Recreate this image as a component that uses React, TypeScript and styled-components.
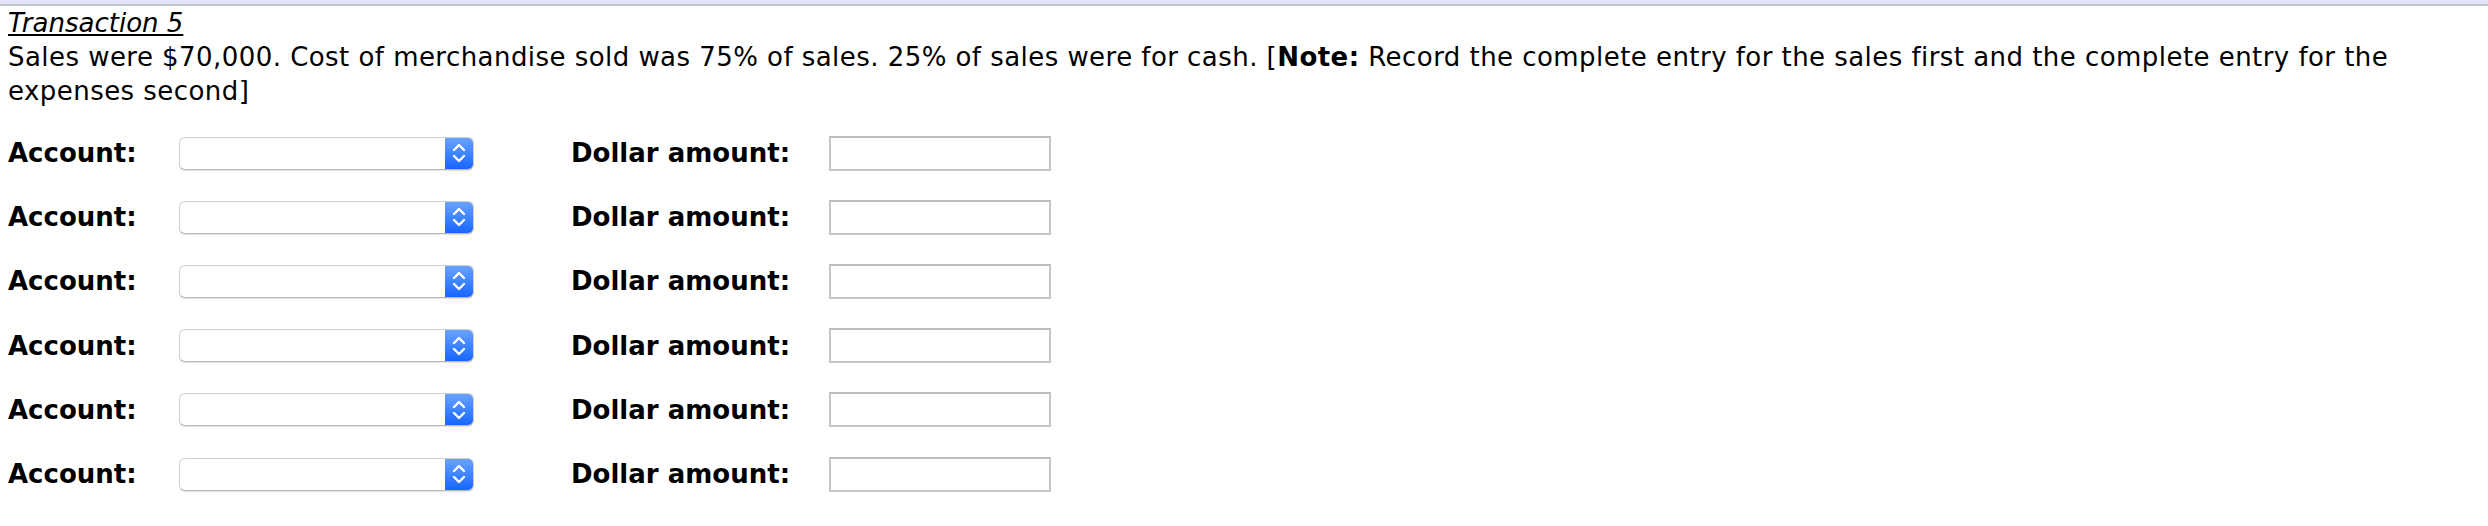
import React from "react";
import styled, { createGlobalStyle } from "styled-components";

const Global = createGlobalStyle`
  html, body { margin: 0; padding: 0; background: #ffffff; }
  body { font-family: Verdana, "DejaVu Sans", sans-serif; color: #000; }
`;

const Page = styled.div`
  display: flex;
  flex-direction: column;
`;

const TopBand = styled.div`
  height: 4px;
  background: #e4e4f8;
  border-bottom: 2px solid #c4c4cc;
`;

const Content = styled.div`
  padding: 0 8px;
  font-size: 26px;
  line-height: 34px;
`;

const Title = styled.div`
  font-style: italic;
  text-decoration: underline;
  text-underline-offset: 2px;
`;

const Question = styled.p`
  margin: 0;
  letter-spacing: 0.45px;
`;

const Rows = styled.div`
  display: flex;
  flex-direction: column;
  padding-top: 13px;
`;

const Row = styled.div`
  display: grid;
  grid-template-columns: 171px 295px 97px 258px 222px;
  align-items: center;
  height: 64.2px;
`;

const Label = styled.span`
  font-weight: bold;
  white-space: nowrap;
`;

const Select = styled.div`
  grid-column: 2;
  display: flex;
  height: 33px;
  border-radius: 6px;
  background: #fff;
  border: 1px solid #cfcfcf;
  border-bottom-color: #b8b8b8;
  box-shadow: 0 1px 1px rgba(0, 0, 0, 0.12);
  overflow: hidden;
  box-sizing: border-box;
`;

const SelectField = styled.div`
  flex: 1;
`;

const SelectButton = styled.div`
  width: 28px;
  display: flex;
  align-items: center;
  justify-content: center;
  background: linear-gradient(#6aa3ff, #1566ff);
`;

const DollarLabel = styled(Label)`
  grid-column: 4;
`;

const Input = styled.div`
  grid-column: 5;
  height: 35px;
  box-sizing: border-box;
  border: 2px solid #c6c6c6;
  border-top-color: #bdbdbd;
  background: #fff;
`;

const Chevrons = () => (
  <svg width="14" height="22" viewBox="0 0 14 22" fill="none">
    <path d="M2 8 L7 3 L12 8" stroke="#fff" strokeWidth="2.4" strokeLinecap="round" strokeLinejoin="round" />
    <path d="M2 14 L7 19 L12 14" stroke="#fff" strokeWidth="2.4" strokeLinecap="round" strokeLinejoin="round" />
  </svg>
);

export default function App() {
  const rows = [0, 1, 2, 3, 4, 5];
  return (
    <Page>
      <Global />
      <TopBand />
      <Content>
        <Title>Transaction 5</Title>
        <Question>
          Sales were $70,000. Cost of merchandise sold was 75% of sales. 25% of sales were for cash. [<b>Note:</b> Record the complete entry for the sales first and the complete entry for the expenses second]
        </Question>
        <Rows>
          {rows.map((r) => (
            <Row key={r}>
              <Label>Account:</Label>
              <Select>
                <SelectField />
                <SelectButton>
                  <Chevrons />
                </SelectButton>
              </Select>
              <DollarLabel>Dollar amount:</DollarLabel>
              <Input />
            </Row>
          ))}
        </Rows>
      </Content>
    </Page>
  );
}
